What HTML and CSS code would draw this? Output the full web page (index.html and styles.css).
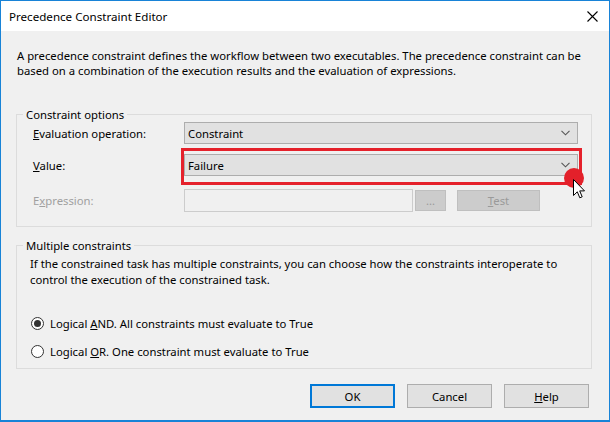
FILE: index.html
```html
<!DOCTYPE html>
<html>
<head>
<meta charset="utf-8">
<title>Precedence Constraint Editor</title>
<link rel="stylesheet" href="styles.css">
</head>
<body>
<div class="window">
  <div class="titlebar">
    <span class="title">Precedence Constraint Editor</span>
    <svg class="close" width="11" height="11" viewBox="0 0 11 11"><path d="M0.5 0.5 L10.5 10.5 M10.5 0.5 L0.5 10.5" stroke="#000" stroke-width="1.1" fill="none"/></svg>
  </div>
  <div class="content">
    <p class="intro">A precedence constraint defines the workflow between two executables. The precedence constraint can be<br>based on a combination of the execution results and the evaluation of expressions.</p>

    <fieldset class="group group-options">
      <legend>Constraint options</legend>
      <div class="form">
        <label class="lbl"><u>E</u>valuation operation:</label>
        <div class="combo"><span>Constraint</span><svg class="chev" width="9" height="6" viewBox="0 0 9 6"><path d="M0.5 0.8 L4.5 4.8 L8.5 0.8" stroke="#555" stroke-width="1.1" fill="none"/></svg></div>
        <label class="lbl"><u>V</u>alue:</label>
        <div class="combo"><span>Failure</span><svg class="chev" width="9" height="6" viewBox="0 0 9 6"><path d="M0.5 0.8 L4.5 4.8 L8.5 0.8" stroke="#555" stroke-width="1.1" fill="none"/></svg></div>
        <label class="lbl lbl-disabled row-3">E<u>x</u>pression:</label>
        <div class="expr-row row-3">
          <div class="textbox"></div>
          <button class="btn-disabled btn-dots">...</button>
          <button class="btn-disabled btn-test"><u>T</u>est</button>
        </div>
      </div>
    </fieldset>

    <fieldset class="group group-multi">
      <legend>Multiple constraints</legend>
      <p class="multi-desc">If the constrained task has multiple constraints, you can choose how the constraints interoperate to<br>control the execution of the constrained task.</p>
      <div class="radios">
        <label class="radio"><span class="radio-dot radio-checked"></span><span>Logical <u>A</u>ND. All constraints must evaluate to True</span></label>
        <label class="radio"><span class="radio-dot"></span><span>Logical <u>O</u>R. One constraint must evaluate to True</span></label>
      </div>
    </fieldset>

    <div class="buttons">
      <button class="btn btn-default">OK</button>
      <button class="btn">Cancel</button>
      <button class="btn"><u>H</u>elp</button>
    </div>
  </div>

  <div class="highlight"></div>
  <div class="pin"></div>
  <svg class="cursor" width="13" height="21" viewBox="0 0 13 21"><path d="M0.5 0.5 L0.5 16.5 L4.3 12.8 L6.8 18.8 L9.2 17.8 L6.7 11.9 L11.5 11.9 Z" fill="#fff" stroke="#000" stroke-width="1" stroke-linejoin="miter"/></svg>
</div>
</body>
</html>
```

FILE: styles.css
```css
* { box-sizing: border-box; }

html, body {
  margin: 0;
  padding: 0;
  background: #f0f0f0;
}

body {
  font-family: "Noto Sans", "Open Sans", sans-serif;
  font-size: 11.3px;
  color: #000;
}

.window {
  position: relative;
  width: 610px;
  height: 422px;
  border: 1px solid #1883d7;
  border-bottom-width: 2px;
  background: #f0f0f0;
  overflow: hidden;
}

.titlebar {
  height: 30px;
  background: #fff;
  display: flex;
  align-items: center;
  justify-content: space-between;
  padding: 1px 10px 0 8px;
}

.title {
  line-height: 15px;
  font-size: 11.6px;
}

.close {
  display: block;
  margin-right: 1px;
}

.content {
  padding-top: 16px;
}

.intro {
  margin: 0 0 0 16px;
  line-height: 15px;
  padding-top: 1px;
  white-space: nowrap;
}

.group {
  margin: 0 17px 0 15px;
  padding: 0;
  border: 1px solid #dcdcdc;
  min-width: 0;
}

.group legend {
  margin-left: 6px;
  padding: 0 3px;
  line-height: 15px;
}

.group-options {
  margin-top: 29px;
  padding-bottom: 14px;
}

.form {
  display: grid;
  grid-template-columns: 151px 394px;
  row-gap: 10px;
  align-items: center;
  padding-left: 16px;
}

.lbl {
  line-height: 15px;
  white-space: nowrap;
}

.lbl-disabled {
  color: #a0a0a0;
}

.row-3 {
  margin-top: 3px;
}

.combo {
  height: 22px;
  background: #e1e1e1;
  border: 1px solid #adadad;
  display: flex;
  align-items: center;
  justify-content: space-between;
  padding: 0 7px 0 3px;
  line-height: 15px;
}

.chev {
  display: block;
}

.expr-row {
  display: flex;
  align-items: center;
}

.textbox {
  width: 229px;
  height: 23px;
  background: #f0f0f0;
  border: 1px solid #cccccc;
}

button {
  font-family: inherit;
  font-size: 11.3px;
  color: #000;
  margin: 0;
  padding: 0;
}

.btn-disabled {
  height: 21px;
  background: #cccccc;
  border: 1px solid #bfbfbf;
  color: #9a9a9a;
  line-height: 15px;
}

.btn-dots {
  width: 31px;
  margin-left: 2px;
}

.btn-test {
  width: 83px;
  margin-left: 11px;
}

.group-multi {
  margin-top: 11px;
  padding-bottom: 9px;
}

.multi-desc {
  margin: 3px 0 0 13px;
  line-height: 16px;
  white-space: nowrap;
}

.radios {
  margin-top: 28px;
  display: flex;
  flex-direction: column;
  gap: 13px;
  padding-left: 14px;
}

.radio {
  display: flex;
  align-items: center;
  line-height: 15px;
  white-space: nowrap;
}

.radio-dot {
  width: 13px;
  height: 13px;
  border-radius: 50%;
  border: 1px solid #333;
  background: #fff;
  margin-right: 6px;
  position: relative;
  flex: none;
}

.radio-checked::after {
  content: "";
  position: absolute;
  left: 2px;
  top: 2px;
  width: 7px;
  height: 7px;
  border-radius: 50%;
  background: #333;
}

.buttons {
  display: flex;
  justify-content: flex-end;
  gap: 12px;
  margin-top: 15px;
  padding-right: 20px;
}

.btn {
  width: 85px;
  height: 24px;
  background: #e1e1e1;
  border: 1px solid #adadad;
  line-height: 15px;
}

.btn-default {
  border: 2px solid #0078d7;
}

.highlight {
  position: absolute;
  left: 180px;
  top: 147px;
  width: 401px;
  height: 37px;
  border: 3px solid #e5212b;
}

.pin {
  position: absolute;
  left: 563px;
  top: 167px;
  width: 20px;
  height: 20px;
  border-radius: 50%;
  background: #e3202a;
}

.cursor {
  position: absolute;
  left: 572px;
  top: 178px;
}
```
